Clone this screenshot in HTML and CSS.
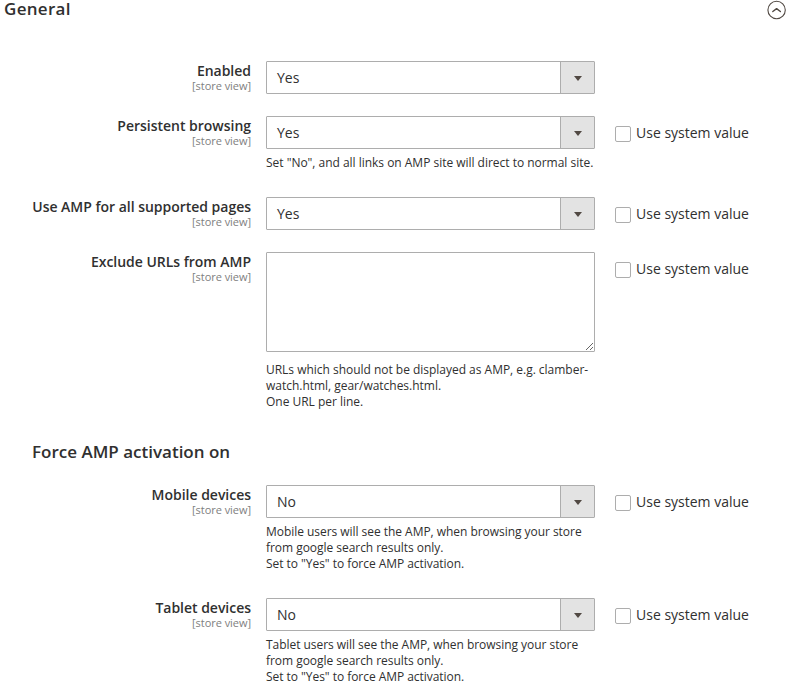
FILE: index.html
```html
<!DOCTYPE html>
<html lang="en">
<head>
<meta charset="utf-8">
<title>General</title>
<link rel="stylesheet" href="styles.css">
</head>
<body>
<header class="section-head">
  <h1>General</h1>
  <svg class="collapse" width="20" height="20" viewBox="0 0 20 20" fill="none" stroke="#514943"><circle cx="9.6" cy="10" r="8.7" stroke-width="1.1"/><path d="M5.8 11.500 9.600 8.600l3.800 2.900" stroke-width="1.400" stroke-linecap="round" stroke-linejoin="round"/></svg>
</header>
<main class="fields">
  <div class="row enabled">
    <div class="label"><b>Enabled</b><small>[store view]</small></div>
    <div class="value"><div class="select"><span>Yes</span><i></i></div></div>
  </div>
  <div class="row persistent">
    <div class="label"><b>Persistent browsing</b><small>[store view]</small></div>
    <div class="value"><div class="select"><span>Yes</span><i></i></div><p>Set "No", and all links on AMP site will direct to normal site.</p></div>
    <label class="system"><input type="checkbox"><span>Use system value</span></label>
  </div>
  <div class="row supported">
    <div class="label"><b>Use AMP for all supported pages</b><small>[store view]</small></div>
    <div class="value"><div class="select"><span>Yes</span><i></i></div></div>
    <label class="system"><input type="checkbox"><span>Use system value</span></label>
  </div>
  <div class="row exclude">
    <div class="label"><b>Exclude URLs from AMP</b><small>[store view]</small></div>
    <div class="value"><textarea></textarea><p>URLs which should not be displayed as AMP, e.g. clamber-<br>watch.html, gear/watches.html.<br>One URL per line.</p></div>
    <label class="system"><input type="checkbox"><span>Use system value</span></label>
  </div>
  <h2>Force AMP activation on</h2>
  <div class="row mobile">
    <div class="label"><b>Mobile devices</b><small>[store view]</small></div>
    <div class="value"><div class="select"><span>No</span><i></i></div><p>Mobile users will see the AMP, when browsing your store<br>from google search results only.<br>Set to "Yes" to force AMP activation.</p></div>
    <label class="system"><input type="checkbox"><span>Use system value</span></label>
  </div>
  <div class="row tablet">
    <div class="label"><b>Tablet devices</b><small>[store view]</small></div>
    <div class="value"><div class="select"><span>No</span><i></i></div><p>Tablet users will see the AMP, when browsing your store<br>from google search results only.<br>Set to "Yes" to force AMP activation.</p></div>
    <label class="system"><input type="checkbox"><span>Use system value</span></label>
  </div>
</main>
</body>
</html>
```
FILE: styles.css
```css
* { box-sizing: border-box; }
body { margin: 0; height: 690px; overflow: hidden; background: #fff; color: #303030; font: 14px/19px "Open Sans", sans-serif; }
.section-head { display: flex; justify-content: space-between; height: 61px; padding: 0 4px; }
h1 { margin: 0; font-size: 17px; line-height: 18px; font-weight: 600; letter-spacing: .3px; }
.collapse { margin-right: -1px; }
.row { display: grid; grid-template-columns: 251px 329px 150px; column-gap: 15px; align-items: start; }
.enabled, .supported { height: 55px; }
.persistent { height: 81px; }
.exclude { height: 189px; }
.mobile { height: 113px; }
.label { display: flex; flex-direction: column; text-align: right; white-space: nowrap; }
.label b { font-weight: 600; line-height: 19px; letter-spacing: -.02px; }
.label small { color: #808080; font-size: 11px; line-height: 12px; letter-spacing: -.04px; }
.select { display: flex; height: 33px; border: 1px solid #adadad; border-radius: 1px; }
.select span { flex: 1; padding: 6px 10px; }
.select i { display: grid; place-items: center; width: 34px; border-left: 1px solid #adadad; background: #e3e3e3; }
.select i::before { content: ""; margin-top: 1px; border: 4px solid transparent; border-top: 5px solid #514943; border-bottom: 0; }
.value p { margin: 6px 0 0; font-size: 12px; line-height: 16px; white-space: nowrap; letter-spacing: -.02px; }
.mobile .value p, .tablet .value p { letter-spacing: -.04px; }
textarea { display: block; width: 329px; height: 100px; margin: 0; border: 1px solid #adadad; border-radius: 1px; resize: vertical; }
.exclude .value p { margin-top: 10px; }
.system { display: flex; gap: 5px; padding: 7px 0 0 5px; white-space: nowrap; }
.system input { appearance: none; width: 16px; height: 16px; margin: 3px 0 0; border: 1px solid #adadad; border-radius: 2px; background: #fff; }
h2 { height: 44px; margin: 0 0 0 32px; font-size: 17px; line-height: 22px; font-weight: 600; }
```
